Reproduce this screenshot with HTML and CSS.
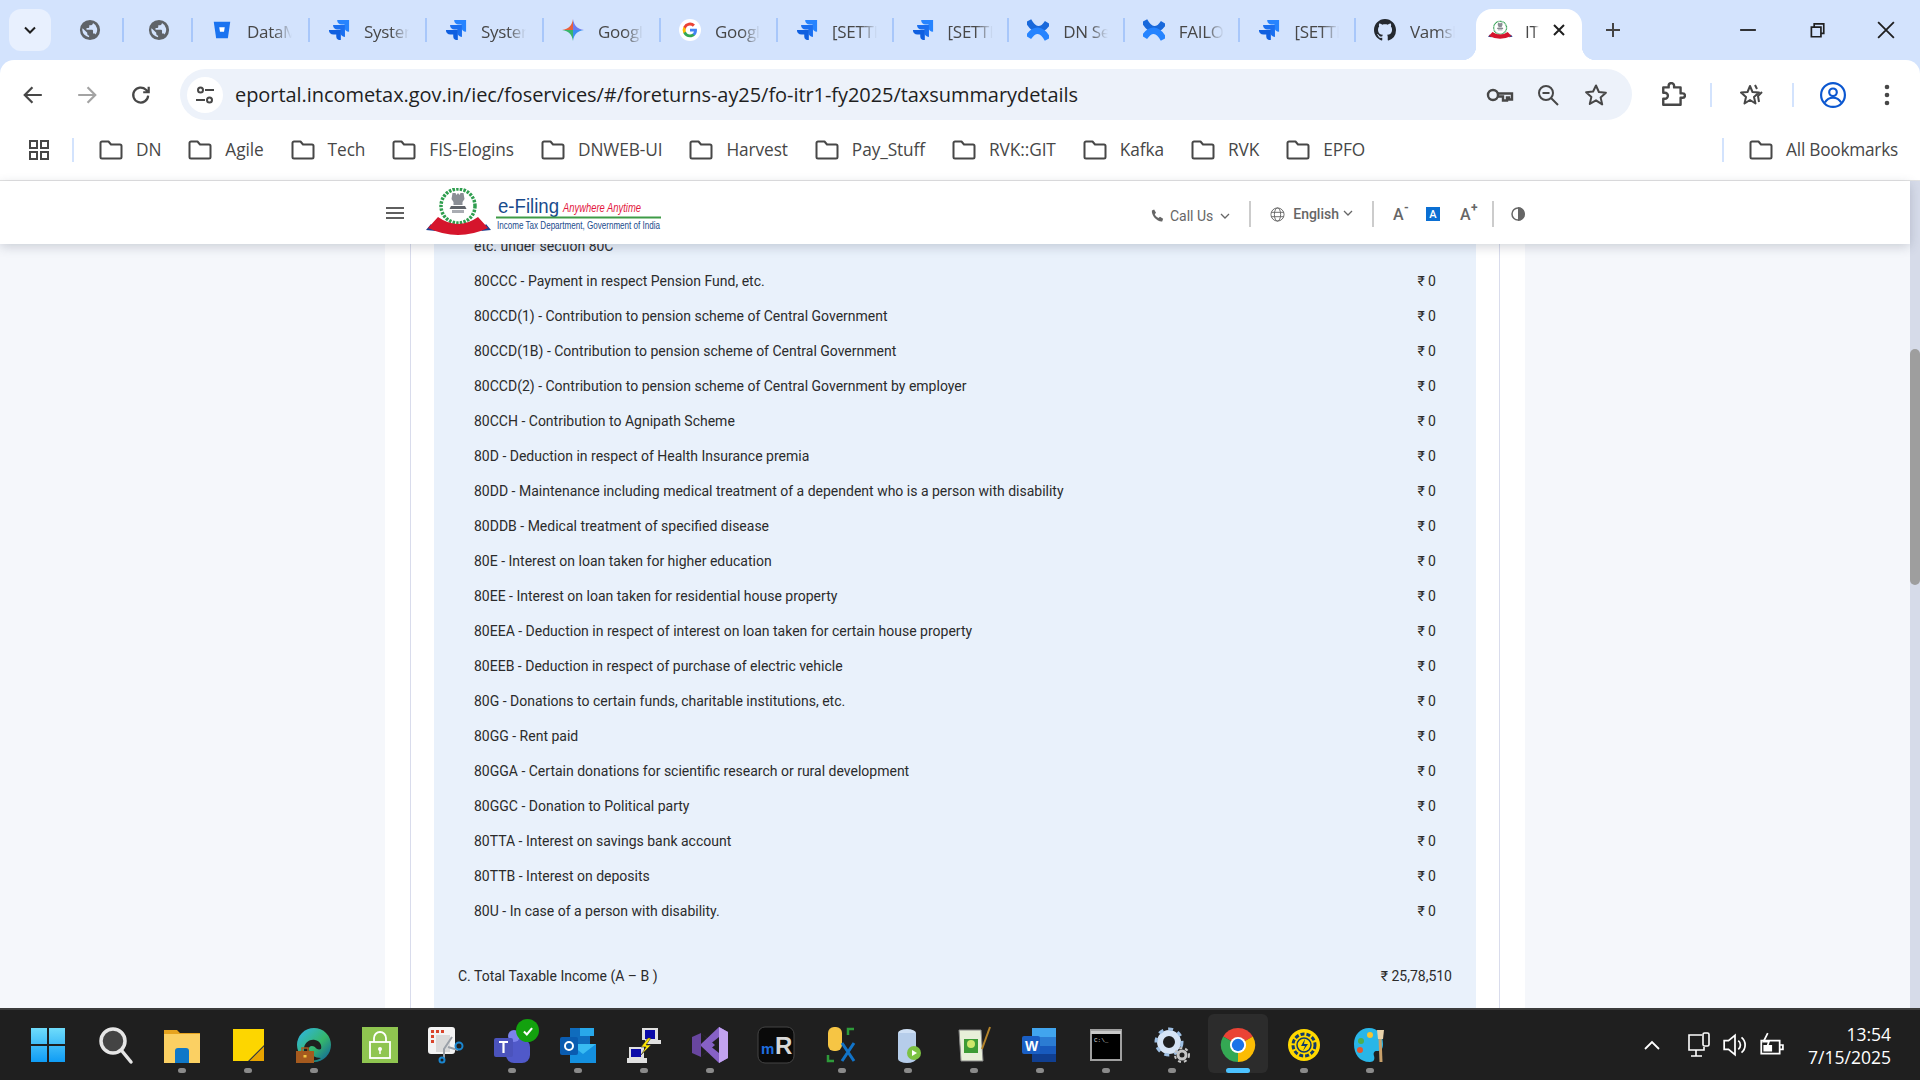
FILE: index.html
```html
<!DOCTYPE html>
<html lang="en">
<head>
<meta charset="utf-8">
<title>Income Tax e-Filing</title>
<link rel="stylesheet" href="styles.css">
</head>
<body>
<svg class="defs" aria-hidden="true">
  <defs>
    <linearGradient id="tile" x1="0" y1="0" x2="0" y2="1"><stop offset="0" stop-color="#6fdcfb"/><stop offset="1" stop-color="#0f9cf5"/></linearGradient>
    <linearGradient id="edge" x1="0" y1="0" x2="1" y2="1"><stop offset="0" stop-color="#2fb5ee"/><stop offset=".55" stop-color="#35b76b"/><stop offset="1" stop-color="#0c59a4"/></linearGradient>
    <symbol id="globe" viewBox="0 0 24 24"><path fill="#5f6368" d="M12 1a11 11 0 100 22 11 11 0 000-22zM3.600 12c0-.7.1-1.400.3-2l5.100 5.100v1c0 1.100.9 2 2 2v1.800A8.500 8.500 0 013.600 12zm14.600 5.100c-.3-.8-1-1.400-1.900-1.400h-1v-3c0-.6-.4-1-1-1H8.200v-2h2c.6 0 1-.4 1-1v-2h2c1.100 0 2-.9 2-2v-.400a8.500 8.500 0 012.800 12.800z"/></symbol>
    <symbol id="jira" viewBox="0 0 24 24"><path fill="#2684ff" d="M10 1h13v13c-3 0-5-2-5-5V6h-3c-3 0-5-2-5-5z"/><path fill="#1a6ff0" d="M5.500 6.500h13v13c-3 0-5-2-5-5v-3h-3c-3 0-5-2-5-5z"/><path fill="#0f5fe0" d="M1 12h13v11c-3 0-5-1-5-4v-2H6c-3 0-5-2-5-5z"/></symbol>
    <symbol id="conf" viewBox="0 0 24 24"><path fill="none" stroke="#1868db" stroke-width="7" d="M1.500 2C8 14 16 14 22.500 4"/><path fill="none" stroke="#2684ff" stroke-width="7" d="M1.500 20C8 10 16 10 22.500 22"/></symbol>
    <symbol id="bit" viewBox="0 0 24 24"><path fill="#1a73f0" d="M3 3h18l-2.600 18H5.600z"/><path fill="#fff" d="M9 9h6l-.8 5H9.800z"/></symbol>
    <symbol id="gemini" viewBox="0 0 24 24"><path fill="#e8603c" d="M12 0v12H0c7.500-1 11-5 12-12z"/><path fill="#6d7cf0" d="M12 0v12h12c-7.500-1-11-5-12-12z"/><path fill="#3a8ef0" d="M12 24V12h12c-7.500 1-11 5-12 12z"/><path fill="#38b56a" d="M12 24V12H0c7.500 1 11 5 12 12z"/></symbol>
    <symbol id="gicon" viewBox="0 0 24 24"><circle cx="12" cy="12" r="12" fill="#fff"/><path fill="#4285f4" d="M19.600 12.200c0-.6-.1-1.100-.1-1.600H12v3h4.300a3.700 3.700 0 01-1.600 2.400v2h2.600c1.500-1.400 2.300-3.400 2.300-5.800z"/><path fill="#34a853" d="M12 20c2.200 0 4-.7 5.300-2l-2.600-2c-.7.500-1.600.8-2.700.8-2.100 0-3.900-1.400-4.500-3.300H4.800v2.100A8 8 0 0012 20z"/><path fill="#fbbc05" d="M7.500 13.500a4.800 4.800 0 010-3V8.400H4.800a8 8 0 000 7.200z"/><path fill="#ea4335" d="M12 7.200c1.200 0 2.300.4 3.100 1.200l2.300-2.300A8 8 0 004.800 8.400l2.700 2.100C8.100 8.600 9.900 7.200 12 7.200z"/></symbol>
    <symbol id="gh" viewBox="0 0 16 16"><path fill="#24292f" d="M8 0C3.580 0 0 3.580 0 8c0 3.540 2.290 6.530 5.470 7.590.4.070.55-.17.55-.38 0-.19-.01-.82-.01-1.490-2.010.37-2.530-.49-2.690-.94-.09-.23-.48-.94-.82-1.130-.28-.15-.68-.52-.01-.53.63-.01 1.080.58 1.230.82.720 1.210 1.870.87 2.330.66.070-.52.280-.87.510-1.070-1.780-.2-3.640-.89-3.640-3.950 0-.87.310-1.590.820-2.150-.08-.2-.36-1.020.08-2.120 0 0 .67-.21 2.200.82.640-.18 1.320-.27 2-.27.680 0 1.360.09 2 .27 1.530-1.040 2.200-.82 2.200-.82.440 1.100.160 1.920.080 2.120.510.560.820 1.270.820 2.150 0 3.070-1.870 3.750-3.650 3.950.290.250.540.730.540 1.480 0 1.070-.01 1.930-.01 2.200 0 .210.150.460.550.380A8.013 8.013 0 0016 8c0-4.420-3.580-8-8-8z"/></symbol>
    <symbol id="folder" viewBox="0 0 24 20"><path fill="none" stroke="#474747" stroke-width="2" stroke-linejoin="round" d="M1.500 3a1.500 1.500 0 011.500-1.500h6.500L12 4.500h9A1.500 1.500 0 0122.500 6v11a1.500 1.500 0 01-1.500 1.500H3A1.500 1.500 0 011.500 17z"/></symbol>
    <symbol id="emblem" viewBox="0 0 66 48">
      <circle cx="32" cy="18" r="17" fill="none" stroke="#2f9e4f" stroke-width="3.500" stroke-dasharray="2.500 1.200"/>
      <path fill="#8a8e95" d="M26.500 5h3l1 2 1.500-2 1.500 2 1-2h3l1 6-2 3v3h-9v-3l-2-3z"/>
      <path fill="#5f6369" d="M25 18h14l1.500 3h-17z"/>
      <path fill="#a9acb2" d="M26 22h12v3H26z"/>
      <path fill="#1d3f8f" d="M0 42l5-6 5 7zM65 42l-5-6-5 7z"/>
      <path fill="#d5152c" d="M12 29Q32 43 52 29L62 40Q32 54 2 40Z"/>
    </symbol>
  </defs>
</svg>

<div class="tabstrip">
  <button class="tab-menu"><svg class="i12" viewBox="0 0 12 8"><path d="M1 1.500l5 5 5-5" fill="none" stroke="#1f1f1f" stroke-width="2"/></svg></button>
  <div class="tab narrow"><svg class="tab-ic"><use href="#globe"/></svg></div>
  <div class="tab narrow"><svg class="tab-ic"><use href="#globe"/></svg></div>
  <div class="tab wide lead"><svg class="tab-ic"><use href="#bit"/></svg><span class="tab-t">DataM</span></div>
  <div class="tab wide lead"><svg class="tab-ic"><use href="#jira"/></svg><span class="tab-t">System</span></div>
  <div class="tab wide lead"><svg class="tab-ic"><use href="#jira"/></svg><span class="tab-t">System</span></div>
  <div class="tab wide lead"><svg class="tab-ic"><use href="#gemini"/></svg><span class="tab-t">Google</span></div>
  <div class="tab wide lead"><svg class="tab-ic"><use href="#gicon"/></svg><span class="tab-t">Google</span></div>
  <div class="tab wide"><svg class="tab-ic"><use href="#jira"/></svg><span class="tab-t">[SETTI</span></div>
  <div class="tab wide"><svg class="tab-ic"><use href="#jira"/></svg><span class="tab-t">[SETTI</span></div>
  <div class="tab wide"><svg class="tab-ic"><use href="#conf"/></svg><span class="tab-t">DN Se</span></div>
  <div class="tab wide"><svg class="tab-ic"><use href="#conf"/></svg><span class="tab-t">FAILO</span></div>
  <div class="tab wide"><svg class="tab-ic"><use href="#jira"/></svg><span class="tab-t">[SETTI</span></div>
  <div class="tab wide last"><svg class="tab-ic"><use href="#gh"/></svg><span class="tab-t">Vamsh</span></div>
  <div class="tab active"><svg class="tab-ic fav"><use href="#emblem"/></svg><span class="tab-t short">IT</span><svg class="tab-x" viewBox="0 0 12 12"><path d="M1 1l10 10M11 1L1 11" stroke="#1f1f1f" stroke-width="2"/></svg></div>
  <svg class="new-tab" viewBox="0 0 16 16"><path d="M8 1v14M1 8h14" stroke="#444" stroke-width="2"/></svg>
  <div class="win">
    <svg class="win-ic" viewBox="0 0 16 16"><path d="M1 8h14" stroke="#1f1f1f" stroke-width="1.600"/></svg>
    <svg class="win-ic" viewBox="0 0 16 16"><path d="M3 5.500h8.500V14H3zM5.500 5V2.500H14V11h-2.500" fill="none" stroke="#1f1f1f" stroke-width="1.500"/></svg>
    <svg class="win-ic" viewBox="0 0 16 16"><path d="M1 1l14 14M15 1L1 15" stroke="#1f1f1f" stroke-width="1.600"/></svg>
  </div>
</div>

<div class="toolbar">
  <svg class="nav" viewBox="0 0 20 20"><path d="M18 10H3M9.500 3L2.500 10l7 7" fill="none" stroke="#474747" stroke-width="2"/></svg>
  <svg class="nav" viewBox="0 0 20 20"><path d="M2 10h15M10.500 3l7 7-7 7" fill="none" stroke="#a3a3a3" stroke-width="2"/></svg>
  <svg class="nav" viewBox="0 0 20 20"><path d="M16.500 10.500a6.800 6.800 0 11-2-5.300l2.300 2.300M17 2.500v5h-5" fill="none" stroke="#474747" stroke-width="2"/></svg>
  <div class="omnibox">
    <span class="chip"><svg class="i20" viewBox="0 0 20 20"><g fill="none" stroke="#474747" stroke-width="2"><circle cx="5.500" cy="5" r="2.500"/><path d="M10 5h9M1 15h9"/><circle cx="14.500" cy="15" r="2.500"/></g></svg></span>
    <span class="url">eportal.incometax.gov.in/iec/foservices/#/foreturns-ay25/fo-itr1-fy2025/taxsummarydetails</span>
    <svg class="omni-ic key" viewBox="0 0 28 16"><g fill="none" stroke="#474747" stroke-width="2.400"><circle cx="7" cy="8" r="5"/><path d="M12 6.500h14v6h-3v-2h-2v3h-4v-4h-5"/></g></svg>
    <svg class="omni-ic" viewBox="0 0 24 24"><g fill="none" stroke="#474747" stroke-width="2"><circle cx="10" cy="10" r="7"/><path d="M6.500 10h7M15 15l7 7"/></g></svg>
    <svg class="omni-ic" viewBox="0 0 24 24"><path fill="none" stroke="#474747" stroke-width="2" stroke-linejoin="round" d="M12 2.500l2.900 6.500 7 .7-5.300 4.700 1.600 7L12 17.300 5.800 20.900l1.600-7-5.300-4.700 7-.7z"/></svg>
  </div>
  <svg class="tool ext" viewBox="0 0 24 24"><path fill="none" stroke="#474747" stroke-width="2.200" stroke-linejoin="round" d="M3 5h5V3.500a2.500 2.500 0 015 0V5h6v5.500h2a2 2 0 010 4h-2V21H3v-5.500h1.500a2.800 2.800 0 000-5.600H3z"/></svg>
  <span class="tool-sep"></span>
  <svg class="tool star" viewBox="0 0 26 24"><g fill="none" stroke="#474747" stroke-width="2" stroke-linejoin="round"><path d="M10 3l2.500 6 6.500.6-5 4.400 1.500 6.500L10 17l-5.500 3.500L6 14 1 9.600 7.500 9z"/><path d="M15 2l2 4M22 9l-4 4 1 6"/></g></svg>
  <span class="tool-sep second"></span>
  <svg class="tool prof" viewBox="0 0 24 24"><g fill="none" stroke="#0b57d0" stroke-width="2"><circle cx="12" cy="12" r="11"/><circle cx="12" cy="9.500" r="3.500"/><path d="M4.500 19c2-3.500 5-4.500 7.500-4.500s5.500 1 7.500 4.500"/></g></svg>
  <svg class="tool dots" viewBox="0 0 6 24"><g fill="#474747"><circle cx="3" cy="4" r="2.300"/><circle cx="3" cy="12" r="2.300"/><circle cx="3" cy="20" r="2.300"/></g></svg>
</div>

<div class="bookmarks">
  <svg class="apps" viewBox="0 0 20 20"><path fill="none" stroke="#474747" stroke-width="2" d="M1 1h7v7H1zM12 1h7v7h-7zM1 12h7v7H1zM12 12h7v7h-7z"/></svg>
  <span class="bm-sep"></span>
  <a class="bm"><svg class="fold"><use href="#folder"/></svg>DN</a>
  <a class="bm"><svg class="fold"><use href="#folder"/></svg>Agile</a>
  <a class="bm"><svg class="fold"><use href="#folder"/></svg>Tech</a>
  <a class="bm"><svg class="fold"><use href="#folder"/></svg>FIS-Elogins</a>
  <a class="bm"><svg class="fold"><use href="#folder"/></svg>DNWEB-UI</a>
  <a class="bm"><svg class="fold"><use href="#folder"/></svg>Harvest</a>
  <a class="bm"><svg class="fold"><use href="#folder"/></svg>Pay_Stuff</a>
  <a class="bm"><svg class="fold"><use href="#folder"/></svg>RVK::GIT</a>
  <a class="bm"><svg class="fold"><use href="#folder"/></svg>Kafka</a>
  <a class="bm"><svg class="fold"><use href="#folder"/></svg>RVK</a>
  <a class="bm"><svg class="fold"><use href="#folder"/></svg>EPFO</a>
  <span class="bm-sep end"></span>
  <a class="bm"><svg class="fold"><use href="#folder"/></svg>All Bookmarks</a>
</div>

<div class="viewport">
  <div class="site">
    <header class="site-head">
      <svg class="burger" viewBox="0 0 18 12"><path d="M0 1h18M0 6h18M0 11h18" stroke="#5f5f5f" stroke-width="1.800"/></svg>
      <svg class="logo" viewBox="0 0 236 50">
        <use href="#emblem" x="0" y="0" width="66" height="48"/>
        <text x="72" y="25" class="lg-e" textLength="61" lengthAdjust="spacingAndGlyphs">e-Filing</text>
        <text x="137" y="24" class="lg-a" textLength="78" lengthAdjust="spacingAndGlyphs">Anywhere Anytime</text>
        <rect x="70" y="28.500" width="165" height="2" fill="#3f9b47"/>
        <text x="71" y="41" class="lg-i" textLength="163" lengthAdjust="spacingAndGlyphs">Income Tax Department, Government of India</text>
      </svg>
      <div class="head-tools">
        <svg class="h-ic phone" viewBox="0 0 24 24"><path fill="#666" d="M6.600 2.500l3 5-2 2.500c1.200 2.600 3.300 4.700 6 6l2.400-2 5 3-1.500 4.500C12 22.500 2 12.500 3 4z"/></svg>
        <span class="h-t">Call Us</span>
        <svg class="h-ch" viewBox="0 0 10 6"><path d="M1 1l4 4 4-4" fill="none" stroke="#666" stroke-width="1.300"/></svg>
        <span class="h-sep"></span>
        <svg class="h-ic" viewBox="0 0 24 24"><g fill="none" stroke="#666" stroke-width="1.500"><circle cx="12" cy="12" r="10.500"/><ellipse cx="12" cy="12" rx="5" ry="10.500"/><path d="M2 8.500h20M2 15.500h20"/></g></svg>
        <span class="h-t strong">English</span>
        <svg class="h-ch up" viewBox="0 0 10 6"><path d="M1 1l4 4 4-4" fill="none" stroke="#666" stroke-width="1.300"/></svg>
        <span class="h-sep"></span>
        <span class="fs">A<i class="mini">-</i></span>
        <span class="fs-on">A</span>
        <span class="fs plus">A<i class="mini">+</i></span>
        <span class="h-sep last"></span>
        <svg class="contrast" viewBox="0 0 14 14"><circle cx="7" cy="7" r="6" fill="none" stroke="#666" stroke-width="1.500"/><path d="M7 0a7 7 0 010 14z" fill="#666"/></svg>
      </div>
    </header>
    <main class="page">
      <div class="card">
        <div class="card-in">
          <section class="panel">
            <div class="row"><span>etc. under section 80C</span></div>
            <div class="row"><span>80CCC - Payment in respect Pension Fund, etc.</span><span>₹ 0</span></div>
            <div class="row"><span>80CCD(1) - Contribution to pension scheme of Central Government</span><span>₹ 0</span></div>
            <div class="row"><span>80CCD(1B) - Contribution to pension scheme of Central Government</span><span>₹ 0</span></div>
            <div class="row"><span>80CCD(2) - Contribution to pension scheme of Central Government by employer</span><span>₹ 0</span></div>
            <div class="row"><span>80CCH - Contribution to Agnipath Scheme</span><span>₹ 0</span></div>
            <div class="row"><span>80D - Deduction in respect of Health Insurance premia</span><span>₹ 0</span></div>
            <div class="row"><span>80DD - Maintenance including medical treatment of a dependent who is a person with disability</span><span>₹ 0</span></div>
            <div class="row"><span>80DDB - Medical treatment of specified disease</span><span>₹ 0</span></div>
            <div class="row"><span>80E - Interest on loan taken for higher education</span><span>₹ 0</span></div>
            <div class="row"><span>80EE - Interest on loan taken for residential house property</span><span>₹ 0</span></div>
            <div class="row"><span>80EEA - Deduction in respect of interest on loan taken for certain house property</span><span>₹ 0</span></div>
            <div class="row"><span>80EEB - Deduction in respect of purchase of electric vehicle</span><span>₹ 0</span></div>
            <div class="row"><span>80G - Donations to certain funds, charitable institutions, etc.</span><span>₹ 0</span></div>
            <div class="row"><span>80GG - Rent paid</span><span>₹ 0</span></div>
            <div class="row"><span>80GGA - Certain donations for scientific research or rural development</span><span>₹ 0</span></div>
            <div class="row"><span>80GGC - Donation to Political party</span><span>₹ 0</span></div>
            <div class="row"><span>80TTA - Interest on savings bank account</span><span>₹ 0</span></div>
            <div class="row"><span>80TTB - Interest on deposits</span><span>₹ 0</span></div>
            <div class="row"><span>80U - In case of a person with disability.</span><span>₹ 0</span></div>
            <div class="row total"><span>C. Total Taxable Income (A – B )</span><span>₹ 25,78,510</span></div>
          </section>
        </div>
      </div>
    </main>
  </div>
  <div class="scrollbar"><div class="thumb"></div></div>
</div>

<footer class="taskbar">
  <div class="task"><svg class="t-ic" viewBox="0 0 36 36"><path fill="url(#tile)" d="M1 1h16v16H1zM19 1h16v16H19zM1 19h16v16H1zM19 19h16v16H19z"/></svg></div>
  <div class="task"><svg class="t-ic" viewBox="0 0 36 36"><circle cx="15" cy="14" r="12" fill="#444" stroke="#e6e6e6" stroke-width="3.500"/><path d="M24 24l9 11" stroke="#e6e6e6" stroke-width="3.500" stroke-linecap="round"/></svg></div>
  <div class="task dot"><svg class="t-ic" viewBox="0 0 36 36"><path fill="#e6a31e" d="M0 3h13l3 3h20v5H0z"/><path fill="#fbd063" d="M0 7h36v29H0z"/><path fill="#0f78c8" d="M11 24a3 3 0 013-3h8a3 3 0 013 3v12H11z"/></svg></div>
  <div class="task dot"><svg class="t-ic" viewBox="0 0 36 36"><path fill="#fdd600" d="M3 2h31v32H18L3 34z"/><path fill="#3d3d3d" d="M18 34l16-16v2L20 34z"/><path fill="#e8a400" d="M20 34l14-14v14z"/></svg></div>
  <div class="task dot"><svg class="t-ic" viewBox="0 0 36 36"><circle cx="18" cy="18" r="17" fill="url(#edge)"/><path fill="#1f1f1f" d="M8 21c1-6 6-9 11-8 5 1 7 5 6 9-2 1-5 0-6-2-3-2-7-1-6 3 1 5 6 8 12 8-3 2-7 3-11 2-4-3-7-7-6-12z"/><path fill="#a55a1e" d="M0 24h18v12H0z"/><rect x="6" y="21" width="6" height="4" fill="none" stroke="#a55a1e" stroke-width="1.500"/><rect x="7.500" y="28" width="3" height="2.500" fill="#f4c542"/></svg></div>
  <div class="task"><svg class="t-ic" viewBox="0 0 36 36"><rect width="36" height="36" fill="#8fc550"/><g fill="none" stroke="#fff" stroke-width="1.800"><rect x="8" y="15" width="20" height="16"/><path d="M12 15v-4a6 6 0 0112 0v4"/></g><circle cx="18" cy="22" r="2" fill="#fff"/><path d="M18 23v4" stroke="#fff" stroke-width="1.500"/></svg></div>
  <div class="task"><svg class="t-ic" viewBox="0 0 36 36"><rect x="0" y="0" width="27" height="27" rx="3" fill="#f3f3f3"/><path fill="#d9452c" d="M3 3h3v3H3zM8 3h3v3H8zM13 3h3v3h-3zM3 8h3v3H3zM3 13h3v3H3z"/><rect x="8" y="8" width="14" height="17" fill="#d9d9d9"/><path d="M24 10l-8 12v10M20 20l10 3" fill="none" stroke="#9aa0a8" stroke-width="2"/><g fill="none" stroke="#1a86d0" stroke-width="2"><circle cx="31" cy="19" r="3.500"/><circle cx="14" cy="33" r="2.500"/></g></svg></div>
  <div class="task dot badge-wrap"><svg class="t-ic" viewBox="0 0 36 36"><circle cx="24" cy="16" r="5" fill="#7b83eb"/><rect x="12" y="12" width="24" height="24" rx="8" fill="#5059c9"/><circle cx="20" cy="9" r="6" fill="#7b83eb"/><rect x="0" y="11" width="19" height="19" rx="2" fill="#4b53bc"/><path d="M5 15h9M9.500 15v11" stroke="#fff" stroke-width="2.200"/></svg><span class="badge"><svg viewBox="0 0 12 12"><path d="M2.500 6.500l2.500 2.500 4.500-5.500" fill="none" stroke="#fff" stroke-width="1.800"/></svg></span></div>
  <div class="task dot"><svg class="t-ic" viewBox="0 0 36 36"><path fill="#0f6cbd" d="M10 1h20v16H10z"/><path fill="#28a8ea" d="M20 1h14v8H20z"/><path fill="#1490df" d="M10 17h26v19H10z"/><path fill="#50d9ff" d="M36 17L23 27 10 17z" opacity=".6"/><rect x="0" y="10" width="18" height="18" rx="2" fill="#0a5cb0"/><circle cx="9" cy="19" r="4" fill="none" stroke="#fff" stroke-width="2"/></svg></div>
  <div class="task dot"><svg class="t-ic" viewBox="0 0 36 36"><path fill="#e0e0e0" d="M16 1h16v12h3v4H19v-4h-3z"/><path fill="#0a0aa8" d="M19 3h10v9H19z"/><path fill="#e0e0e0" d="M3 20h15v11h3v5H1v-5h2z"/><path fill="#0a0aa8" d="M5 22h10v8H5z"/><path fill="#ffe600" stroke="#333" stroke-width=".6" d="M22 11l-7 9h5l-5 8 10-10h-5l5-7z"/></svg></div>
  <div class="task dot"><svg class="t-ic" viewBox="0 0 36 36"><path fill="#68469f" d="M0 10l9-4v24l-9-4z"/><path fill="#8661c5" d="M27 0l9 5v26l-9 5L9 19V17z"/><path fill="#c2a3f0" d="M27 0v36l9-5V5z"/><path fill="#1f1f1f" d="M27 10v16l-10-8z"/><path fill="#8661c5" d="M9 6l9 8-4 4 4 4-9 8 14-12z"/></svg></div>
  <div class="task"><svg class="t-ic" viewBox="0 0 36 36"><rect width="36" height="36" rx="7" fill="#0a0a0a" stroke="#444"/><text x="3" y="27" class="mr-m">m</text><text x="17" y="27" class="mr-r">R</text></svg></div>
  <div class="task dot"><svg class="t-ic" viewBox="0 0 36 36"><rect x="4" y="0" width="14" height="24" rx="6" fill="#f6c544"/><path fill="none" stroke="#2e9b3a" stroke-width="2.500" d="M24 8V2h6M4 28v6h6"/><path stroke="#1174c9" stroke-width="3" d="M18 16l12 18M30 16L18 34"/></svg></div>
  <div class="task dot"><svg class="t-ic" viewBox="0 0 36 36"><ellipse cx="17" cy="6" rx="9" ry="4" fill="#cfe0f5"/><path fill="#b6cdea" d="M8 6h18v26a9 4 0 01-18 0z"/><circle cx="24" cy="26" r="7" fill="#7cc242"/><path fill="#fff" d="M22 23l5 3-5 3z"/></svg></div>
  <div class="task dot"><svg class="t-ic" viewBox="0 0 36 36"><path fill="#e8efd9" stroke="#888" d="M3 3h22l2 31H5z"/><path fill="#3d9b35" d="M8 12h14v14H8z"/><circle cx="15" cy="17" r="4" fill="#cde66a"/><path d="M34 0l-8 22" stroke="#b5842a" stroke-width="2"/></svg></div>
  <div class="task dot"><svg class="t-ic" viewBox="0 0 36 36"><path fill="#41a5ee" d="M10 1h24v9H10z"/><path fill="#2b7cd3" d="M10 10h24v9H10z"/><path fill="#185abd" d="M10 19h24v8H10z"/><path fill="#103f91" d="M10 27h24v8H10z"/><rect x="0" y="9" width="18" height="18" rx="2" fill="#1a5fc4"/><text x="3" y="23.500" class="wd">W</text></svg></div>
  <div class="task dot"><svg class="t-ic" viewBox="0 0 36 36"><rect x="3" y="3" width="30" height="30" fill="#000" stroke="#a0a0a0" stroke-width="2"/><path d="M3 4h30v3H3z" fill="#c9c9c9"/><text x="6" y="15" class="cmd">C:\_</text></svg></div>
  <div class="task dot"><svg class="t-ic" viewBox="0 0 36 36"><circle cx="15" cy="15" r="9" fill="none" stroke="#d6e4f5" stroke-width="6"/><circle cx="15" cy="15" r="13" fill="none" stroke="#9fc0e4" stroke-width="3" stroke-dasharray="5 5"/><circle cx="28" cy="28" r="4" fill="none" stroke="#c5c5c5" stroke-width="3"/><circle cx="28" cy="28" r="7" fill="none" stroke="#c5c5c5" stroke-width="2" stroke-dasharray="3 3"/></svg></div>
  <div class="task on"><svg class="t-ic chrome" viewBox="0 0 40 40"><path fill="#ea4335" d="M20 20L4.400 11A18 18 0 0135.600 11z"/><path fill="#34a853" d="M20 20L4.400 11A18 18 0 0020 38z"/><path fill="#fbbc04" d="M20 20L35.600 11A18 18 0 0120 38z"/><circle cx="20" cy="20" r="8.500" fill="#fff"/><circle cx="20" cy="20" r="6.500" fill="#1a73e8"/></svg></div>
  <div class="task dot"><svg class="t-ic" viewBox="0 0 36 36"><circle cx="18" cy="18" r="16" fill="#ffd800"/><circle cx="18" cy="18" r="11" fill="none" stroke="#123a6b" stroke-width="3" stroke-dasharray="4 2"/><circle cx="18" cy="18" r="7" fill="#ffd800" stroke="#123a6b" stroke-width="1.500"/><path d="M19 12l-4 7h4l-2 5 5-7h-4z" fill="#123a6b"/></svg></div>
  <div class="task dot"><svg class="t-ic" viewBox="0 0 36 36"><path fill="#29b6e8" d="M17 1c9 0 14 7 14 16 0 5-2 7-6 7-3 0-4 2-3 5s0 6-4 6C7 35 2 27 2 17 2 8 8 1 17 1z"/><circle cx="18" cy="8" r="3" fill="#f9c32f"/><circle cx="9" cy="14" r="3" fill="#4caf50"/><circle cx="8" cy="23" r="3" fill="#e8552f"/><path d="M28 10l1 25" stroke="#c8a06a" stroke-width="3"/><path d="M25 3h7l-1 9h-5z" fill="#e9d3ab"/></svg></div>
  <div class="tray">
    <svg class="tr-ch" viewBox="0 0 16 10"><path d="M1 9l7-7 7 7" fill="none" stroke="#fff" stroke-width="1.800"/></svg>
    <svg class="tr-ic" viewBox="0 0 24 26"><g fill="none" stroke="#fff" stroke-width="1.600"><path d="M15 3H2v15h15v-3"/><path d="M9 18v6M4 24h11"/><rect x="16" y="1" width="6" height="13" rx="1.500"/></g></svg>
    <svg class="tr-ic" viewBox="0 0 24 24"><g fill="none" stroke="#fff" stroke-width="1.600"><path d="M2 8h4l6-5v18l-6-5H2z"/><path d="M15 8a5 5 0 010 8M18 5a9 9 0 010 14"/></g></svg>
    <svg class="tr-ic" viewBox="0 0 24 24"><g fill="none" stroke="#fff" stroke-width="1.600"><path d="M3 8h17v12H3z"/><path d="M20 12h3v4h-3"/><path d="M9 1L5 9h5l-2 6"/></g><path fill="#fff" d="M5 12h8v6H5z"/></svg>
    <div class="clock"><span>13:54</span><span>7/15/2025</span></div>
  </div>
</footer>
</body>
</html>
```

FILE: styles.css
```css
* { box-sizing: border-box; }
html, body { margin: 0; height: 100%; }
body {
  width: 1920px; height: 1080px; overflow: hidden;
  display: flex; flex-direction: column;
  background: #d3e3fd;
  font-family: "Open Sans", "Noto Sans", sans-serif;
  color: #444;
}
.defs { position: absolute; width: 0; height: 0; }

/* tab strip */
.tabstrip { height: 60px; flex: none; display: flex; align-items: center; padding-left: 9px; position: relative; }
.tab-menu { width: 42px; height: 42px; margin: 0 4px 0 0; border: 0; border-radius: 12px; background: #e8f0fe; display: flex; align-items: center; justify-content: center; padding: 0; flex: none; }
.i12 { width: 12px; height: 8px; }
.tab { height: 60px; display: flex; align-items: center; position: relative; flex: none; }
.tab::after { content: ""; position: absolute; right: 0; top: 18px; height: 24px; width: 2px; background: #a8c7fa; }
.tab.narrow { width: 69px; padding-left: 24px; }
.tab.wide { width: 115.6px; padding-left: 18px; }
.tab.wide.lead { width: 117px; }
.tab.last::after { display: none; }
.tab-ic { width: 22px; height: 22px; flex: none; }
.tab-ic.fav { width: 25px; }
.tab-t { margin: 3px 0 0 14px; width: 45px; overflow: hidden; white-space: nowrap; font-size: 17px; letter-spacing: -.3px; color: #474747;
  -webkit-mask-image: linear-gradient(90deg, #000 60%, transparent); mask-image: linear-gradient(90deg, #000 60%, transparent); }
.tab-t.short { margin-left: 12px; width: 14px; }
.tab.active { width: 106px; margin-left: 4.400px; padding: 0 0 9px 12px; height: 51px; margin-top: 9px; background: #fff; border-radius: 16px 16px 0 0; }
.tab.active::before { content: ""; position: absolute; left: -14px; bottom: 0; width: 14px; height: 14px; background: radial-gradient(circle at 0 0, transparent 14px, #fff 14.500px); }
.tab.active::after { left: 106px; right: auto; top: auto; bottom: 0; width: 14px; height: 14px; background: radial-gradient(circle at 100% 0, transparent 14px, #fff 14.500px); }
.tab-x { width: 12px; height: 12px; margin-left: 14px; flex: none; }
.new-tab { width: 16px; height: 16px; margin: 0 0 0 23px; flex: none; }
.win { margin-left: auto; display: flex; padding-right: 25px; gap: 51px; }
.win-ic { width: 18px; height: 18px; }

/* toolbar */
.toolbar { height: 60px; flex: none; background: #fff; border-radius: 14px 14px 0 0; display: flex; align-items: flex-end; padding-left: 22px; position: relative; }
.nav { width: 22px; height: 22px; margin: 0 32px 14px 0; flex: none; }
.omnibox { width: 1452px; height: 51px; margin-left: -4px; background: #edf2fa; border-radius: 26px; display: flex; align-items: center; padding: 0 24px 0 7px; flex: none; }
.chip { width: 36px; height: 36px; border-radius: 50%; background: #fff; display: flex; align-items: center; justify-content: center; flex: none; }
.i20 { width: 20px; height: 20px; }
.url { margin-left: 12px; flex: 1; font-size: 20px; letter-spacing: -.06px; color: #1f1f1f; white-space: nowrap; }
.omni-ic { width: 24px; height: 24px; margin-left: 24px; flex: none; }
.omni-ic.key { width: 28px; height: 16px; margin-right: -2px; }
.tool { width: 26px; height: 26px; flex: none; margin: 0 0 12px 28px; }
.tool-sep { width: 2px; height: 24px; background: #d3e3fd; margin: 0 0 13px 24px; flex: none; }
.tool-sep.second { margin-left: 26px; }
.tool.prof { margin-left: 26px; }
.tool.dots { width: 6px; margin-left: 38px; }

/* bookmarks */
.bookmarks { height: 61px; flex: none; background: #fff; border-bottom: 1px solid #e2e2e2; display: flex; align-items: center; padding: 0 0 1px 29px; gap: 27px; font-size: 17.300px; }
.apps { width: 20px; height: 20px; margin-right: -4px; }
.bm-sep { width: 2px; height: 24px; background: #d3e3fd; margin-right: -2px; }
.bm-sep.end { margin-left: auto; margin-right: -2px; }
.bm { display: flex; align-items: center; gap: 13px; color: #474747; letter-spacing: -.1px; white-space: nowrap; }
.fold { width: 24px; height: 20px; flex: none; }
.bookmarks > .bm:last-child { margin-right: 22px; letter-spacing: -.25px; }

/* viewport */
.viewport { flex: 1; min-height: 0; display: flex; background: #fff; }
.site { flex: 1; min-width: 0; display: flex; flex-direction: column; font-family: Roboto, "Liberation Sans", sans-serif; }
.scrollbar { width: 10px; flex: none; background: #d6dbe9; padding-top: 168px; }
.thumb { height: 236px; background: #9e9e9e; border-radius: 5px; }

.site-head { height: 63px; flex: none; background: #fff; display: flex; align-items: center; padding: 0 385px 0 386px; position: relative; z-index: 2; box-shadow: 0 3px 10px rgba(60, 70, 90, .22); }
.burger { width: 18px; height: 12px; flex: none; margin-right: 22px; }
.logo { width: 236px; height: 50px; flex: none; }
.lg-e { font: 20px "Liberation Sans", sans-serif; fill: #1a4b8c; }
.lg-a { font: italic 12px "Liberation Sans", sans-serif; fill: #e3173e; }
.lg-i { font: 11px "Liberation Sans", sans-serif; fill: #1a4b8c; }
.head-tools { margin-left: auto; display: flex; align-items: center; color: #666; font-size: 14px; padding-top: 3px; }
.h-ic { width: 15px; height: 15px; flex: none; }
.h-ic.phone { margin-top: 2px; }
.h-t { margin-left: 5px; margin-top: 3px; }
.h-t.strong { margin-left: 8px; margin-top: 0; font-weight: 500; }
.h-ch { width: 10px; height: 6px; margin: 3px 0 0 7px; flex: none; }
.h-ch.up { margin: -3px 0 0 4px; }
.h-sep { width: 2px; height: 26px; background: #ccc; margin: 0 19px; flex: none; }
.h-sep.last { margin-left: 17px; }
.fs { font-size: 16px; font-weight: 500; position: relative; width: 15px; margin-right: 18px; }
.fs.plus { margin-right: 0; }
.mini { position: absolute; left: 11px; top: -4px; font-style: normal; font-size: 12px; font-weight: 700; }
.fs-on { width: 14px; height: 14px; background: #0b6fd3; color: #fff; font-size: 11px; font-weight: 500; display: flex; align-items: center; justify-content: center; margin-right: 20px; }
.contrast { width: 14px; height: 14px; flex: none; margin-left: -2px; margin-top: -1px; }

.page { flex: 1; min-height: 0; overflow: hidden; background: #f5f7fb; padding-left: 385px; padding-right: 385px; }
.card { height: 100%; background: #fff; padding: 0 25px; }
.card-in { height: 100%; border-left: 1px solid #d9dcec; border-right: 1px solid #d9dcec; padding: 0 23px; }
.panel { display: flow-root; height: 100%; background: #e9f1fb; padding: 0 40px; color: #2b2b2b; font-size: 14px; }
.row { height: 35px; display: flex; justify-content: space-between; align-items: center; white-space: nowrap; }
.row:first-child { margin-top: -16px; }
.row.total { margin: 30px -16px 0; }

/* taskbar */
.taskbar { height: 72px; flex: none; background: #1f1f1f; border-top: 2px solid #3c3c3c; display: flex; align-items: center; padding-left: 17px; position: relative; }
.task { width: 66px; height: 70px; flex: none; display: flex; align-items: center; justify-content: center; position: relative; }
.task:first-child { padding-right: 4px; }
.t-ic { width: 36px; height: 36px; overflow: visible; }
.t-ic.chrome { width: 38px; height: 38px; }
.task.dot::after { content: ""; position: absolute; left: 29px; bottom: 7px; width: 8px; height: 5px; border-radius: 3px; background: #8a8a8a; }
.task.on::before { content: ""; position: absolute; left: 3px; right: 3px; top: 4px; bottom: 7px; background: #2c2c2c; border-radius: 6px; }
.task.on .t-ic { position: relative; }
.task.on::after { content: ""; position: absolute; left: 21px; width: 24px; bottom: 7px; height: 5px; border-radius: 3px; background: #4cc2ff; }
.badge { position: absolute; right: 6px; top: 9px; width: 23px; height: 23px; border-radius: 50%; background: #13a10e; display: flex; align-items: center; justify-content: center; }
.badge svg { width: 14px; height: 14px; }
.mr-m { font: 700 15px "Liberation Sans", sans-serif; fill: #1f6fe0; }
.mr-r { font: 700 24px "Liberation Sans", sans-serif; fill: #d8d8d8; }
.wd { font: 700 14px "Liberation Sans", sans-serif; fill: #fff; }
.cmd { font: 6px "Liberation Mono", monospace; fill: #ddd; }
.tray { margin-left: auto; display: flex; align-items: center; padding-right: 29px; color: #fff; }
.tr-ch { width: 16px; height: 10px; margin-right: 26px; }
.tr-ic { width: 26px; height: 26px; margin-right: 10px; }
.clock { display: flex; flex-direction: column; align-items: flex-end; gap: 5px; margin-left: 14px; font-size: 17.500px; line-height: 18px; font-family: "Open Sans", sans-serif; }
```
